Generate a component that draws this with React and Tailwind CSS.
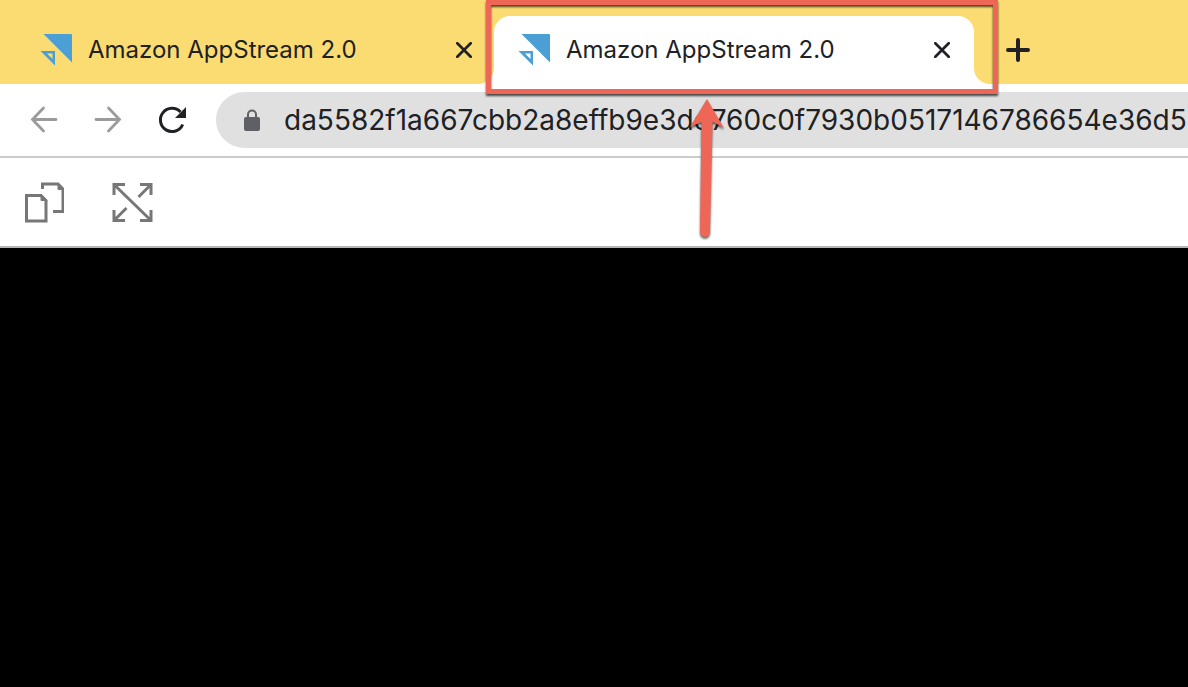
import React from "react";

function AppStreamLogo() {
  return (
    <svg className="h-8 w-8 shrink-0" viewBox="0 0 32 32" aria-hidden="true">
      <path d="M3.500 0H31a1 1 0 0 1 1 1v27.500z" fill="#4b9fd5" />
      <path
        fillRule="evenodd"
        d="M.5 17H15v14.500zM7 19.500l5.500 5.500v-5.500z"
        fill="#4b9fd5"
      />
    </svg>
  );
}

function CloseIcon() {
  return (
    <svg className="h-4 w-4" viewBox="0 0 16 16" aria-hidden="true">
      <path d="M1.300 1.300l13.400 13.400M14.700 1.300L1.300 14.700" stroke="#202124" strokeWidth="2.700" strokeLinecap="round" />
    </svg>
  );
}

function Flare({ className, d }) {
  return (
    <svg className={className} viewBox="0 0 16 16" aria-hidden="true">
      <path d={d} fill="#fff" />
    </svg>
  );
}

function Tab({ active }) {
  return (
    <div
      role="tab"
      aria-selected={active}
      className={
        active
          ? "relative flex w-[480px] shrink-0 items-center rounded-t-2xl bg-white px-6"
          : "flex w-[478px] shrink-0 items-center pr-[22px] pl-6"
      }
    >
      {active && <Flare className="absolute bottom-0 -left-4 h-4 w-4" d="M16 0v16H0A16 16 0 0 0 16 0z" />}
      <AppStreamLogo />
      <span className="ml-4 flex-1 text-2xl">Amazon AppStream 2.0</span>
      <button type="button" aria-label="Close tab">
        <CloseIcon />
      </button>
      {active && <Flare className="absolute -right-4 bottom-0 h-4 w-4" d="M0 0v16h16A16 16 0 0 1 0 0z" />}
    </div>
  );
}

export default function App() {
  return (
    <div className="relative flex min-h-screen flex-col overflow-hidden bg-black font-['Inter',sans-serif] text-[#202124]">
      <header className="flex h-[84px] bg-[#fbdc72] pt-4 pl-4">
        <div role="tablist" className="flex shrink-0">
          <Tab active={false} />
          <Tab active />
        </div>
        <button type="button" aria-label="New tab" className="ml-8 self-center">
          <svg className="h-6 w-6" viewBox="0 0 24 24" aria-hidden="true">
            <path d="M12 2v20M2 12h20" stroke="#202124" strokeWidth="4" strokeLinecap="round" />
          </svg>
        </button>
      </header>

      <nav className="flex h-[74px] items-center border-b-2 border-[#cccccc] bg-white pl-7">
        <button type="button" aria-label="Back">
          <svg className="h-8 w-8" viewBox="0 0 32 32" fill="none" stroke="#9b9b9b" strokeWidth="2.800" strokeLinecap="round">
            <path d="M28 15.500H4.500M15.500 4L4.500 15.500l11 11.500" />
          </svg>
        </button>
        <button type="button" aria-label="Forward" className="ml-8">
          <svg className="h-8 w-8" viewBox="0 0 32 32" fill="none" stroke="#9b9b9b" strokeWidth="2.800" strokeLinecap="round">
            <path d="M4 15.500h23.500M16.500 4l11 11.500-11 11.500" />
          </svg>
        </button>
        <button type="button" aria-label="Reload" className="ml-8">
          <svg className="h-8 w-8" viewBox="0 0 32 32" aria-hidden="true">
            <path d="M26.700 20.500A11.600 11.600 0 1 1 24.500 8" fill="none" stroke="#202124" strokeWidth="3" />
            <path d="M30 3v11H19z" fill="#202124" />
          </svg>
        </button>
        <div className="ml-7 flex h-14 min-w-0 flex-1 items-center rounded-l-full bg-[#e0e0e0] pl-7">
          <svg className="h-6 w-4 shrink-0" viewBox="0 0 16 24" aria-hidden="true">
            <path d="M4 10V6.500a4 4 0 0 1 8 0V10" fill="none" stroke="#5f6065" strokeWidth="2" />
            <rect x="0" y="9" width="16" height="14" rx="2" fill="#5f6065" />
          </svg>
          <input
            type="text"
            aria-label="Address"
            defaultValue="da5582f1a667cbb2a8effb9e3dd760c0f7930b0517146786654e36d5"
            className="ml-6 h-14 min-w-0 flex-1 bg-transparent text-[28px] outline-none"
          />
        </div>
      </nav>

      <div className="flex h-[90px] items-center gap-12 border-b-2 border-[#b5b5b5] bg-white pl-6">
        <button type="button" aria-label="Copy">
          <svg className="h-11 w-10" viewBox="0 0 40 44" fill="none" stroke="#777" strokeWidth="3">
            <path d="M2.500 15.500h14.500l5 5V41H2.500z" />
            <path d="M18.500 9V4H34l5 5V31.500H29" />
            <path d="M17 14v6.500h6l-6-6zM34 3v6.500h5.500z" fill="#777" strokeWidth="1" />
          </svg>
        </button>
        <button type="button" aria-label="Full screen">
          <svg className="h-11 w-10 overflow-visible" viewBox="0 0 40 44" fill="none" stroke="#777" strokeWidth="3">
            <path d="M2 15V4.500h11M28 4.500h11V15M2 30v10.500h11M28 40.500h11V30M2 4.500l37 36M39 4.500L26.500 17M2 40.500L14.500 28" />
          </svg>
        </button>
      </div>

      <main className="flex-1 bg-black" />

      <div className="pointer-events-none absolute top-0 left-[486px] h-[94px] w-[512px] border-[5px] border-[#ed6656] drop-shadow-[0_2px_1px_rgba(0,0,0,0.7)]" />
      <svg
        className="pointer-events-none absolute top-[96px] left-[686px] h-[148px] w-10 drop-shadow-[0_2px_1px_rgba(0,0,0,0.6)]"
        viewBox="0 0 40 148"
        aria-hidden="true"
      >
        <path d="M21 3l17 29-11.500-6.500L24 136a5 5 0 0 1-10 0l1.500-110L4 31z" fill="#ed6656" />
      </svg>
    </div>
  );
}
